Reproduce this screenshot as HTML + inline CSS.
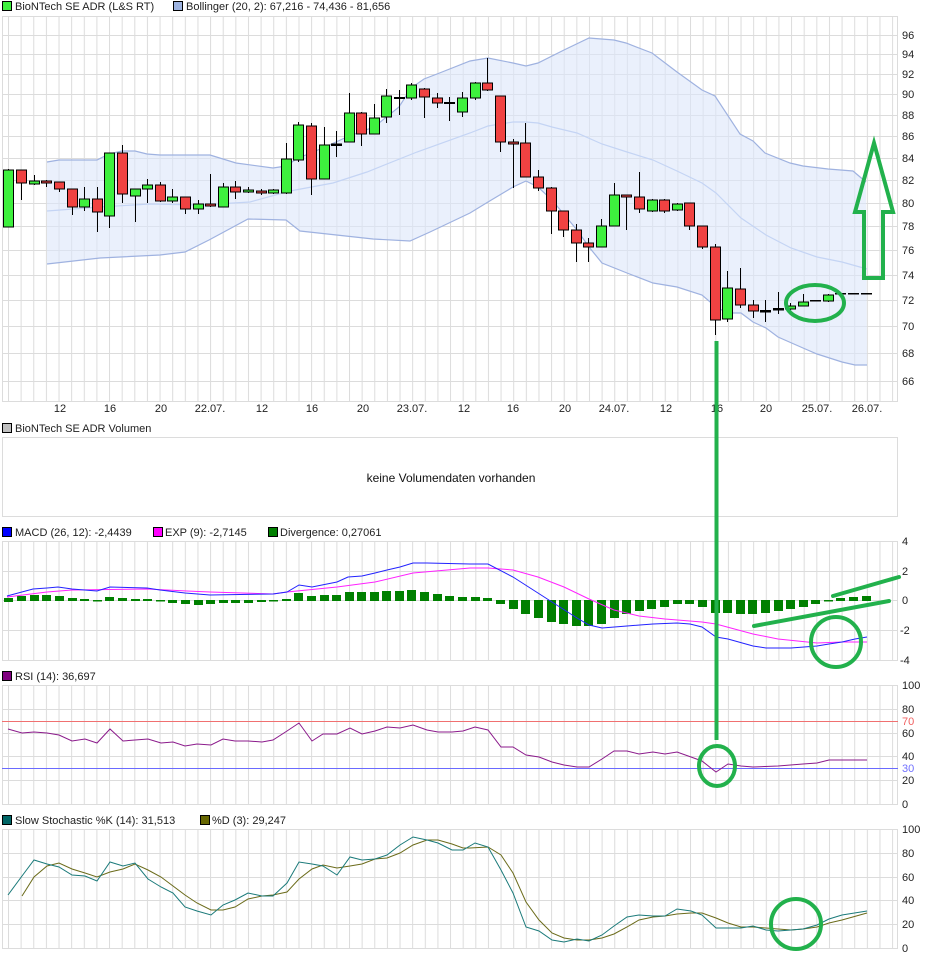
<!DOCTYPE html>
<html><head><meta charset="utf-8"><style>
html,body{margin:0;padding:0;background:#fff;}
svg{display:block;font-family:"Liberation Sans",sans-serif;font-size:11px;}
</style></head><body>
<svg width="940" height="958" viewBox="0 0 940 958" xmlns="http://www.w3.org/2000/svg">
<defs>
<pattern id="vg" x="8" y="0" width="12.63" height="10" patternUnits="userSpaceOnUse"><rect x="0" y="0" width="1" height="10" fill="#dcdcdc"/></pattern>
<clipPath id="cm"><rect x="2" y="16" width="896" height="386"/></clipPath>
</defs>
<rect width="940" height="958" fill="#fff"/>

<!-- Legend 1 -->
<rect x="2.5" y="1.5" width="9" height="9" fill="#3ef03e" stroke="#000"/>
<text x="15" y="10" fill="#222">BioNTech SE ADR (L&amp;S RT)</text>
<rect x="173.5" y="1.5" width="9" height="9" fill="#9db3e0" stroke="#000"/>
<text x="186" y="10" fill="#222">Bollinger (20, 2): 67,216 - 74,436 - 81,656</text>

<!-- Main plot -->
<rect x="2" y="16" width="896" height="386" fill="url(#vg)"/>
<g stroke="#dcdcdc" stroke-width="1">
<line x1="2" x2="898" y1="16.5" y2="16.5"/><line x1="2" x2="898" y1="35.5" y2="35.5"/><line x1="2" x2="898" y1="54.5" y2="54.5"/><line x1="2" x2="898" y1="74.5" y2="74.5"/><line x1="2" x2="898" y1="94.5" y2="94.5"/><line x1="2" x2="898" y1="115.5" y2="115.5"/><line x1="2" x2="898" y1="136.5" y2="136.5"/><line x1="2" x2="898" y1="158.5" y2="158.5"/><line x1="2" x2="898" y1="180.5" y2="180.5"/><line x1="2" x2="898" y1="203.5" y2="203.5"/><line x1="2" x2="898" y1="226.5" y2="226.5"/><line x1="2" x2="898" y1="250.5" y2="250.5"/><line x1="2" x2="898" y1="275.5" y2="275.5"/><line x1="2" x2="898" y1="300.5" y2="300.5"/><line x1="2" x2="898" y1="326.5" y2="326.5"/><line x1="2" x2="898" y1="353.5" y2="353.5"/><line x1="2" x2="898" y1="381.5" y2="381.5"/>
</g>
<rect x="2.5" y="16.5" width="895" height="385" fill="none" stroke="#dcdcdc"/>
<g clip-path="url(#cm)">
<polygon fill="#dce6fa" fill-opacity="0.6" points="47,162 59,160 97,160 109,154 122,151 135,151 147,154 160,155 210,155 236,163 273,168 286,166 298,158 311,153 336,142 349,136 374,127 399,107 411,88 424,79 437,74 470,61 488,58 513,63 526,66 538,63 564,50 589,38 614,40 626,43 652,53 677,72 702,90 715,96 740,134 753,141 765,153 790,163 803,166 828,169 853,171 866,182 867,365 855,365 842,362 817,354 803,348 778,337 766,328 753,322 741,313 728,313 716,307 702,295 677,287 653,283 627,273 602,263 589,247 577,230 552,200 538,187 526,181 513,187 488,202 470,213 430,232 410,241 373,239 300,231 286,220 248,219 209,240 185,252 160,255 100,258 47,264"/>
<polyline fill="none" stroke="#9fb2e0" stroke-width="1.2" points="47,162 59,160 97,160 109,154 122,151 135,151 147,154 160,155 210,155 236,163 273,168 286,166 298,158 311,153 336,142 349,136 374,127 399,107 411,88 424,79 437,74 470,61 488,58 513,63 526,66 538,63 564,50 589,38 614,40 626,43 652,53 677,72 702,90 715,96 740,134 753,141 765,153 790,163 803,166 828,169 853,171 866,182"/>
<polyline fill="none" stroke="#9fb2e0" stroke-width="1.2" points="47,264 100,258 160,255 185,252 209,240 248,219 286,220 300,231 373,239 410,241 430,232 470,213 488,202 513,187 526,181 538,187 552,200 577,230 589,247 602,263 627,273 653,283 677,287 702,295 716,307 728,313 741,313 753,322 766,328 778,337 803,348 817,354 842,362 855,365 867,365"/>
<polyline fill="none" stroke="#c4d4f4" stroke-width="1.2" points="47,211 100,207 150,204 200,205 250,202 290,191 333,183 367,172 417,152 470,133 488,126 513,122 526,122 538,123 552,127 577,133 602,144 627,152 653,160 677,171 702,183 716,193 741,218 766,235 791,248 817,257 842,262 867,269"/>
</g>

<!-- Candles -->
<g stroke="#000" stroke-width="1">
<line x1="8.5" x2="8.5" y1="169" y2="227"/><rect x="3.5" y="170" width="10" height="57" fill="#3ef03e"/>
<line x1="21.5" x2="21.5" y1="170" y2="200"/><rect x="16.5" y="170" width="10" height="13" fill="#f04242"/>
<line x1="34.5" x2="34.5" y1="175" y2="185"/><rect x="29.5" y="181" width="10" height="3" fill="#3ef03e"/>
<line x1="46.5" x2="46.5" y1="180" y2="187"/><rect x="41.5" y="181" width="10" height="2" fill="#f04242"/>
<line x1="59.5" x2="59.5" y1="182" y2="192"/><rect x="54.5" y="182" width="10" height="7" fill="#f04242"/>
<line x1="72.5" x2="72.5" y1="189" y2="215"/><rect x="67.5" y="189" width="10" height="18" fill="#f04242"/>
<line x1="84.5" x2="84.5" y1="187" y2="211"/><rect x="79.5" y="199" width="10" height="8" fill="#3ef03e"/>
<line x1="97.5" x2="97.5" y1="187" y2="232"/><rect x="92.5" y="199" width="10" height="13" fill="#f04242"/>
<line x1="109.5" x2="109.5" y1="153" y2="228"/><rect x="104.5" y="153" width="10" height="63" fill="#3ef03e"/>
<line x1="122.5" x2="122.5" y1="145" y2="203"/><rect x="117.5" y="153" width="10" height="41" fill="#f04242"/>
<line x1="135.5" x2="135.5" y1="189" y2="222"/><rect x="130.5" y="189" width="10" height="7" fill="#3ef03e"/>
<line x1="147.5" x2="147.5" y1="179" y2="203"/><rect x="142.5" y="185" width="10" height="4" fill="#3ef03e"/>
<line x1="160.5" x2="160.5" y1="182" y2="202"/><rect x="155.5" y="185" width="10" height="16" fill="#f04242"/>
<line x1="172.5" x2="172.5" y1="189" y2="203"/><rect x="167.5" y="197" width="10" height="4" fill="#3ef03e"/>
<line x1="185.5" x2="185.5" y1="197" y2="214"/><rect x="180.5" y="197" width="10" height="12" fill="#f04242"/>
<line x1="198.5" x2="198.5" y1="200" y2="214"/><rect x="193.5" y="204" width="10" height="5" fill="#3ef03e"/>
<line x1="210.5" x2="210.5" y1="174" y2="207"/><rect x="205.5" y="204" width="10" height="2" fill="#f04242"/>
<line x1="223.5" x2="223.5" y1="183" y2="207"/><rect x="218.5" y="187" width="10" height="20" fill="#3ef03e"/>
<line x1="235.5" x2="235.5" y1="181" y2="199"/><rect x="230.5" y="187" width="10" height="5" fill="#f04242"/>
<line x1="248.5" x2="248.5" y1="187" y2="193"/><rect x="243.5" y="190" width="10" height="2" fill="#3ef03e"/>
<line x1="261.5" x2="261.5" y1="189" y2="195"/><rect x="256.5" y="191" width="10" height="2" fill="#f04242"/>
<line x1="273.5" x2="273.5" y1="189" y2="194"/><rect x="268.5" y="190" width="10" height="3" fill="#3ef03e"/>
<line x1="286.5" x2="286.5" y1="143" y2="194"/><rect x="281.5" y="159" width="10" height="34" fill="#3ef03e"/>
<line x1="298.5" x2="298.5" y1="122" y2="162"/><rect x="293.5" y="125" width="10" height="35" fill="#3ef03e"/>
<line x1="311.5" x2="311.5" y1="123" y2="195"/><rect x="306.5" y="126" width="10" height="53" fill="#f04242"/>
<line x1="324.5" x2="324.5" y1="127" y2="179"/><rect x="319.5" y="145" width="10" height="34" fill="#3ef03e"/>
<line x1="336.5" x2="336.5" y1="131" y2="157"/><rect x="331.5" y="144" width="10" height="1.5" fill="#000"/>
<line x1="349.5" x2="349.5" y1="93" y2="142"/><rect x="344.5" y="113" width="10" height="29" fill="#3ef03e"/>
<line x1="361.5" x2="361.5" y1="112" y2="146"/><rect x="356.5" y="113" width="10" height="21" fill="#f04242"/>
<line x1="374.5" x2="374.5" y1="104" y2="134"/><rect x="369.5" y="118" width="10" height="16" fill="#3ef03e"/>
<line x1="386.5" x2="386.5" y1="89" y2="123"/><rect x="381.5" y="96" width="10" height="21" fill="#3ef03e"/>
<line x1="399.5" x2="399.5" y1="90" y2="115"/><rect x="394.5" y="97.5" width="10" height="1" fill="#000"/>
<line x1="411.5" x2="411.5" y1="83" y2="100"/><rect x="406.5" y="85" width="10" height="13" fill="#3ef03e"/>
<line x1="424.5" x2="424.5" y1="88" y2="118"/><rect x="419.5" y="89" width="10" height="8" fill="#f04242"/>
<line x1="437.5" x2="437.5" y1="93" y2="108"/><rect x="432.5" y="98" width="10" height="5" fill="#f04242"/>
<line x1="449.5" x2="449.5" y1="97" y2="121"/><rect x="444.5" y="102.5" width="10" height="1" fill="#000"/>
<line x1="462.5" x2="462.5" y1="92" y2="117"/><rect x="457.5" y="98" width="10" height="14" fill="#3ef03e"/>
<line x1="475.5" x2="475.5" y1="82" y2="100"/><rect x="470.5" y="83" width="10" height="15" fill="#3ef03e"/>
<line x1="487.5" x2="487.5" y1="58" y2="91"/><rect x="482.5" y="83" width="10" height="7" fill="#f04242"/>
<line x1="500.5" x2="500.5" y1="96" y2="152"/><rect x="495.5" y="96" width="10" height="46" fill="#f04242"/>
<line x1="513.5" x2="513.5" y1="139" y2="188"/><rect x="508.5" y="142" width="10" height="2" fill="#f04242"/>
<line x1="525.5" x2="525.5" y1="123" y2="177"/><rect x="520.5" y="143" width="10" height="34" fill="#f04242"/>
<line x1="538.5" x2="538.5" y1="170" y2="191"/><rect x="533.5" y="177" width="10" height="11" fill="#f04242"/>
<line x1="551.5" x2="551.5" y1="187" y2="234"/><rect x="546.5" y="188" width="10" height="23" fill="#f04242"/>
<line x1="563.5" x2="563.5" y1="211" y2="237"/><rect x="558.5" y="211" width="10" height="19" fill="#f04242"/>
<line x1="576.5" x2="576.5" y1="224" y2="262"/><rect x="571.5" y="230" width="10" height="13" fill="#f04242"/>
<line x1="588.5" x2="588.5" y1="238" y2="262"/><rect x="583.5" y="243" width="10" height="4" fill="#f04242"/>
<line x1="601.5" x2="601.5" y1="219" y2="247"/><rect x="596.5" y="226" width="10" height="21" fill="#3ef03e"/>
<line x1="614.5" x2="614.5" y1="183" y2="226"/><rect x="609.5" y="195" width="10" height="31" fill="#3ef03e"/>
<line x1="626.5" x2="626.5" y1="195" y2="230"/><rect x="621.5" y="195" width="10" height="2" fill="#f04242"/>
<line x1="639.5" x2="639.5" y1="172" y2="213"/><rect x="634.5" y="197" width="10" height="12" fill="#f04242"/>
<line x1="652.5" x2="652.5" y1="199" y2="212"/><rect x="647.5" y="200" width="10" height="11" fill="#3ef03e"/>
<line x1="664.5" x2="664.5" y1="199" y2="213"/><rect x="659.5" y="200" width="10" height="11" fill="#f04242"/>
<line x1="677.5" x2="677.5" y1="203" y2="211"/><rect x="672.5" y="204" width="10" height="6" fill="#3ef03e"/>
<line x1="689.5" x2="689.5" y1="203" y2="230"/><rect x="684.5" y="203" width="10" height="23" fill="#f04242"/>
<line x1="702.5" x2="702.5" y1="226" y2="249"/><rect x="697.5" y="226" width="10" height="21" fill="#f04242"/>
<line x1="715.5" x2="715.5" y1="244" y2="335"/><rect x="710.5" y="247" width="10" height="73" fill="#f04242"/>
<line x1="727.5" x2="727.5" y1="271" y2="322"/><rect x="722.5" y="288" width="10" height="31" fill="#3ef03e"/>
<line x1="740.5" x2="740.5" y1="268" y2="308"/><rect x="735.5" y="289" width="10" height="16" fill="#f04242"/>
<line x1="753.5" x2="753.5" y1="300" y2="318"/><rect x="748.5" y="305" width="10" height="6" fill="#f04242"/>
<line x1="765.5" x2="765.5" y1="300" y2="322"/><rect x="760.5" y="310.5" width="10" height="1.5" fill="#000"/>
<line x1="778.5" x2="778.5" y1="292" y2="314"/><rect x="773.5" y="308.5" width="10" height="1.5" fill="#000"/>
<line x1="790.5" x2="790.5" y1="303" y2="310"/><rect x="785.5" y="306" width="10" height="3" fill="#3ef03e"/>
<line x1="803.5" x2="803.5" y1="294" y2="306"/><rect x="798.5" y="302" width="10" height="4" fill="#3ef03e"/>
<rect x="810.5" y="300.5" width="10" height="0.5" fill="#000"/>
<line x1="828.5" x2="828.5" y1="294" y2="302"/><rect x="823.5" y="295" width="10" height="6" fill="#3ef03e"/>
<rect x="835.5" y="293.5" width="10" height="0.5" fill="#000"/>
<rect x="848.5" y="293.5" width="10" height="0.5" fill="#000"/>
<rect x="861.5" y="293.5" width="10" height="0.5" fill="#000"/>
</g>

<!-- main right labels -->
<g fill="#222">
<text x="902" y="39">96</text><text x="902" y="58">94</text><text x="902" y="78">92</text><text x="902" y="98">90</text><text x="902" y="119">88</text><text x="902" y="140">86</text><text x="902" y="162">84</text><text x="902" y="184">82</text><text x="902" y="207">80</text><text x="902" y="230">78</text><text x="902" y="254">76</text><text x="902" y="279">74</text><text x="902" y="304">72</text><text x="902" y="330">70</text><text x="902" y="357">68</text><text x="902" y="385">66</text>
</g>
<g fill="#222" text-anchor="middle">
<text x="60" y="412">12</text><text x="110" y="412">16</text><text x="161" y="412">20</text><text x="210" y="412">22.07.</text><text x="262" y="412">12</text><text x="312" y="412">16</text><text x="363" y="412">20</text><text x="412" y="412">23.07.</text><text x="464" y="412">12</text><text x="513" y="412">16</text><text x="565" y="412">20</text><text x="614" y="412">24.07.</text><text x="666" y="412">12</text><text x="717" y="412">16</text><text x="766" y="412">20</text><text x="817" y="412">25.07.</text><text x="867" y="412">26.07.</text>
</g>

<!-- Volume -->
<rect x="2.5" y="423.5" width="9" height="9" fill="#c0c0c0" stroke="#000"/>
<text x="15" y="432" fill="#222">BioNTech SE ADR Volumen</text>
<rect x="2.5" y="437.5" width="895" height="79" fill="#fff" stroke="#dcdcdc"/>
<text x="451" y="482" fill="#111" font-size="12" text-anchor="middle">keine Volumendaten vorhanden</text>

<!-- MACD -->
<rect x="2.5" y="527.5" width="9" height="9" fill="#0000ff" stroke="#000"/>
<text x="15" y="536" fill="#222">MACD (26, 12): -2,4439</text>
<rect x="153.5" y="527.5" width="9" height="9" fill="#ff00ff" stroke="#000"/>
<text x="165" y="536" fill="#222">EXP (9): -2,7145</text>
<rect x="268.5" y="527.5" width="9" height="9" fill="#008000" stroke="#000"/>
<text x="280" y="536" fill="#222">Divergence: 0,27061</text>
<rect x="2" y="541" width="896" height="120" fill="url(#vg)"/>
<g stroke="#dcdcdc"><line x1="2" x2="898" y1="541.5" y2="541.5"/><line x1="2" x2="898" y1="571.5" y2="571.5"/><line x1="2" x2="898" y1="600.5" y2="600.5"/><line x1="2" x2="898" y1="630.5" y2="630.5"/><line x1="2" x2="898" y1="660.5" y2="660.5"/></g>
<rect x="2.5" y="541.5" width="895" height="119" fill="none" stroke="#dcdcdc"/>
<g fill="#008000">
<rect x="4" y="598" width="9" height="4"/><rect x="17" y="596" width="9" height="5"/><rect x="30" y="595" width="9" height="6"/><rect x="42" y="595" width="9" height="6"/><rect x="55" y="596" width="9" height="5"/><rect x="68" y="598" width="9" height="3"/><rect x="80" y="599" width="9" height="2"/><rect x="93" y="600" width="9" height="1.5"/><rect x="105" y="597" width="9" height="4"/><rect x="118" y="598" width="9" height="3"/><rect x="131" y="599" width="9" height="2"/><rect x="143" y="599" width="9" height="2"/><rect x="156" y="600" width="9" height="1.5"/><rect x="168" y="600" width="9" height="3"/><rect x="181" y="600" width="9" height="4"/><rect x="194" y="600" width="9" height="5"/><rect x="206" y="600" width="9" height="4"/><rect x="219" y="600" width="9" height="3"/><rect x="231" y="600" width="9" height="3"/><rect x="244" y="600" width="9" height="3"/><rect x="257" y="600" width="9" height="2"/><rect x="269" y="600" width="9" height="1.5"/><rect x="282" y="599" width="9" height="2"/><rect x="294" y="593" width="9" height="8"/><rect x="307" y="596" width="9" height="5"/><rect x="320" y="595" width="9" height="6"/><rect x="332" y="595" width="9" height="6"/><rect x="345" y="592" width="9" height="9"/><rect x="357" y="592" width="9" height="9"/><rect x="370" y="592" width="9" height="9"/><rect x="382" y="591" width="9" height="10"/><rect x="395" y="591" width="9" height="10"/><rect x="407" y="590" width="9" height="11"/><rect x="420" y="592" width="9" height="9"/><rect x="433" y="594" width="9" height="7"/><rect x="445" y="596" width="9" height="5"/><rect x="458" y="597" width="9" height="4"/><rect x="471" y="597" width="9" height="4"/><rect x="483" y="598" width="9" height="3"/>
<rect x="496" y="600" width="9" height="4"/><rect x="509" y="600" width="9" height="9"/><rect x="521" y="600" width="9" height="14"/><rect x="534" y="600" width="9" height="18"/><rect x="547" y="600" width="9" height="22"/><rect x="559" y="600" width="9" height="24"/><rect x="572" y="600" width="9" height="26"/><rect x="584" y="600" width="9" height="26"/><rect x="597" y="600" width="9" height="24"/><rect x="610" y="600" width="9" height="18"/><rect x="622" y="600" width="9" height="14"/><rect x="635" y="600" width="9" height="11"/><rect x="647" y="600" width="9" height="9"/><rect x="660" y="600" width="9" height="7"/><rect x="673" y="600" width="9" height="4"/><rect x="685" y="600" width="9" height="4"/><rect x="698" y="600" width="9" height="7"/><rect x="711" y="600" width="9" height="13"/><rect x="723" y="600" width="9" height="13"/><rect x="736" y="600" width="9" height="14"/><rect x="748" y="600" width="9" height="14"/><rect x="761" y="600" width="9" height="13"/><rect x="774" y="600" width="9" height="11"/><rect x="786" y="600" width="9" height="9"/><rect x="799" y="600" width="9" height="7"/><rect x="811" y="600" width="9" height="4"/><rect x="824" y="600" width="9" height="1.5"/><rect x="836" y="598" width="9" height="3"/><rect x="849" y="597" width="9" height="4"/><rect x="862" y="596" width="9" height="5"/>
</g>
<polyline fill="none" stroke="#ff22ff" stroke-width="1" points="7,597 47,592 72,590 147,589 187,591 210,592 273,594 287,592 337,587 375,582 413,573 470,568 488,568 513,570 538,577 564,587 589,599 614,610 639,616 665,619 702,622 716,624 753,634 778,639 817,643 842,642 867,642"/>
<polyline fill="none" stroke="#2222ff" stroke-width="1" points="7,596 33,589 47,588 58,587 72,589 97,591 110,587 147,588 160,590 185,593 210,595 273,594 287,592 299,585 312,587 337,582 348,577 362,576 375,573 387,570 400,567 413,563 427,563 470,564 488,564 513,577 552,602 577,618 589,625 602,628 627,626 653,624 677,623 690,624 702,627 716,637 728,639 753,646 766,648 791,648 817,646 829,644 842,642 855,639 867,637"/>
<g fill="#222"><text x="902" y="545">4</text><text x="902" y="575">2</text><text x="902" y="604">0</text><text x="900" y="634">-2</text><text x="900" y="664">-4</text></g>

<!-- RSI -->
<rect x="2.5" y="671.5" width="9" height="9" fill="#800080" stroke="#000"/>
<text x="15" y="680" fill="#222">RSI (14): 36,697</text>
<rect x="2" y="685" width="896" height="120" fill="url(#vg)"/>
<g stroke="#dcdcdc"><line x1="2" x2="898" y1="685.5" y2="685.5"/><line x1="2" x2="898" y1="709.5" y2="709.5"/><line x1="2" x2="898" y1="733.5" y2="733.5"/><line x1="2" x2="898" y1="756.5" y2="756.5"/><line x1="2" x2="898" y1="780.5" y2="780.5"/><line x1="2" x2="898" y1="804.5" y2="804.5"/></g>
<rect x="2.5" y="685.5" width="895" height="119" fill="none" stroke="#dcdcdc"/>
<line x1="2" x2="898" y1="721.5" y2="721.5" stroke="#f07070"/>
<line x1="2" x2="898" y1="768.5" y2="768.5" stroke="#6a6aff"/>
<polyline fill="none" stroke="#8b1a8b" stroke-width="1" points="8,729 22,733 34,732 47,733 59,735 72,741 85,739 97,743 110,729 123,741 135,740 148,739 161,743 173,742 185,746 197,744 211,745 223,739 235,741 248,741 262,742 273,740 287,731 299,723 312,741 323,734 337,734 350,728 362,734 375,731 387,727 400,728 413,725 427,730 438,732 452,732 463,731 475,727 488,730 501,747 513,747 526,755 539,757 552,762 564,765 577,767 589,767 602,759 614,751 627,751 639,754 653,752 665,754 677,752 691,757 702,761 716,772 728,764 741,766 753,767 778,766 803,764 817,763 829,760 867,760"/>
<g fill="#222"><text x="902" y="689">100</text><text x="902" y="713">80</text><text x="902" y="725" fill="#f06060">70</text><text x="902" y="737">60</text><text x="902" y="760">40</text><text x="902" y="772" fill="#7070ff">30</text><text x="902" y="784">20</text><text x="902" y="808">0</text></g>

<!-- Stochastic -->
<rect x="2.5" y="815.5" width="9" height="9" fill="#006666" stroke="#000"/>
<text x="15" y="824" fill="#222">Slow Stochastic %K (14): 31,513</text>
<rect x="200.5" y="815.5" width="9" height="9" fill="#666600" stroke="#000"/>
<text x="212" y="824" fill="#222">%D (3): 29,247</text>
<rect x="2" y="829" width="896" height="120" fill="url(#vg)"/>
<g stroke="#dcdcdc"><line x1="2" x2="898" y1="829.5" y2="829.5"/><line x1="2" x2="898" y1="853.5" y2="853.5"/><line x1="2" x2="898" y1="877.5" y2="877.5"/><line x1="2" x2="898" y1="900.5" y2="900.5"/><line x1="2" x2="898" y1="924.5" y2="924.5"/><line x1="2" x2="898" y1="948.5" y2="948.5"/></g>
<rect x="2.5" y="829.5" width="895" height="119" fill="none" stroke="#dcdcdc"/>
<polyline fill="none" stroke="#6b6b1a" stroke-width="1" points="22,896 34,877 47,866 59,863 72,869 85,873 97,877 110,872 123,869 135,864 148,870 161,877 173,886 185,895 197,903 211,910 223,910 235,907 248,899 262,896 273,895 287,892 299,879 312,869 323,865 337,868 350,866 362,864 375,859 387,858 400,853 413,845 427,840 438,840 452,844 463,848 470,848 488,847 501,855 513,873 526,902 539,920 552,933 564,938 577,940 589,940 602,938 614,934 627,927 639,920 653,917 665,916 677,914 691,913 702,913 716,918 728,923 741,927 753,927 766,928 778,929 791,930 803,929 817,927 829,923 842,920 867,913"/>
<polyline fill="none" stroke="#1a7a7a" stroke-width="1" points="8,895 22,876 34,860 47,864 59,867 72,875 85,876 97,881 110,862 123,866 135,863 148,879 161,887 173,893 185,907 197,911 211,915 223,905 235,900 248,893 262,896 273,896 287,883 299,862 312,864 323,866 337,875 350,857 362,860 375,859 387,855 400,845 413,837 427,840 438,843 452,850 463,850 475,843 488,847 501,870 513,893 526,927 539,931 552,940 564,942 577,939 589,941 602,935 614,926 627,917 639,915 653,916 665,916 677,909 691,911 702,915 716,928 728,928 741,928 753,926 766,930 778,931 791,930 803,929 817,925 829,919 842,915 867,911"/>
<g fill="#222"><text x="902" y="833">100</text><text x="902" y="857">80</text><text x="902" y="881">60</text><text x="902" y="904">40</text><text x="902" y="928">20</text><text x="902" y="952">0</text></g>

<!-- Annotations -->
<g fill="none" stroke="#22b14c" stroke-width="4" stroke-linecap="round" stroke-linejoin="miter">
<polygon points="874,143 893,212 883,212 883,278 864,278 864,212 855,212"/>
<ellipse cx="815" cy="303" rx="29" ry="18"/>
<line x1="716.5" y1="341" x2="716.5" y2="740" stroke-linecap="butt"/>
<ellipse cx="717" cy="766" rx="18" ry="20"/>
<circle cx="836" cy="642" r="25"/>
<line x1="833" y1="596" x2="899" y2="577"/>
<line x1="754" y1="626" x2="889" y2="601"/>
<circle cx="796" cy="924" r="25"/>
</g>
</svg>
</body></html>
